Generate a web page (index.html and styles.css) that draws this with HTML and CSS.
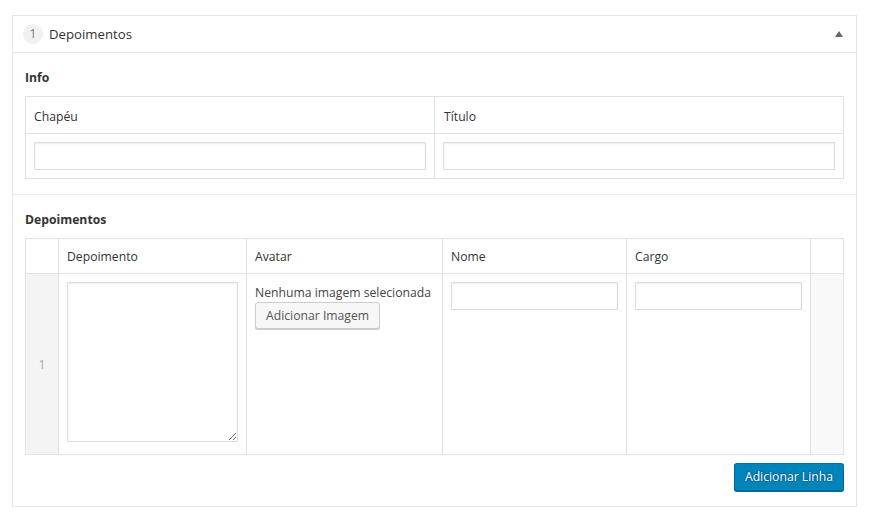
FILE: index.html
```html
<!DOCTYPE html>
<html lang="pt-BR">
  <head>
    <meta charset="UTF-8" />
    <meta name="viewport" content="width=device-width, initial-scale=1.0" />
    <title>Depoimentos</title>
    <link rel="stylesheet" href="styles.css">
  </head>
  <body>
    <div class="postbox">
      <div class="postbox-header">
        <span class="badge">1</span>
        <span class="box-title">Depoimentos</span>
        <span class="toggle"></span>
      </div>

      <div class="field">
        <div class="field-label">Info</div>
        <table class="acf-table info-table">
          <thead>
            <tr>
              <th>Chapéu</th>
              <th>Título</th>
            </tr>
          </thead>
          <tbody>
            <tr>
              <td><input type="text" /></td>
              <td><input type="text" /></td>
            </tr>
          </tbody>
        </table>
      </div>

      <div class="field">
        <div class="field-label">Depoimentos</div>
        <table class="acf-table repeater">
          <thead>
            <tr>
              <th class="order"></th>
              <th class="col-dep">Depoimento</th>
              <th class="col-avatar">Avatar</th>
              <th class="col-nome">Nome</th>
              <th class="col-cargo">Cargo</th>
              <th class="remove"></th>
            </tr>
          </thead>
          <tbody>
            <tr>
              <td class="order">1</td>
              <td><textarea></textarea></td>
              <td>
                <div class="no-image">Nenhuma imagem selecionada</div>
                <button class="button" type="button">Adicionar Imagem</button>
              </td>
              <td><input type="text" /></td>
              <td><input type="text" /></td>
              <td class="remove"></td>
            </tr>
          </tbody>
        </table>
        <div class="actions">
          <button class="button button-primary" type="button">Adicionar Linha</button>
        </div>
      </div>
    </div>
  </body>
</html>
```

FILE: styles.css
```css
body {
  margin: 0;
  padding: 15px 12px;
  background: #fff;
  font-family: "Segoe UI", "Open Sans", "Noto Sans", sans-serif;
  font-size: 12.2px;
  color: #444;
}

.postbox {
  border: 1px solid #e5e5e5;
  background: #fff;
}

.postbox-header {
  display: flex;
  align-items: center;
  height: 36px;
  padding: 0 10px;
  border-bottom: 1px solid #e5e5e5;
}

.badge {
  width: 20px;
  height: 20px;
  border-radius: 50%;
  background: #f1f1f1;
  color: #777;
  text-align: center;
  line-height: 20px;
  font-size: 12px;
}

.box-title {
  margin-left: 6px;
  color: #333;
  font-size: 13.2px;
}

.toggle {
  margin-left: auto;
  margin-right: 3px;
  width: 0;
  height: 0;
  border-left: 4px solid transparent;
  border-right: 4px solid transparent;
  border-bottom: 6px solid #666;
}

.field {
  padding: 15px 12px;
}

.field + .field {
  border-top: 1px solid #eee;
}

.field-label {
  font-weight: bold;
  color: #333;
  margin-bottom: 10px;
  line-height: 18px;
  padding-top: 1px;
  height: 17px;
}

.acf-table {
  width: 100%;
  border: 1px solid #e1e1e1;
  border-collapse: collapse;
  table-layout: fixed;
}

.acf-table th,
.acf-table td {
  border: 1px solid #e1e1e1;
  padding: 8px;
  text-align: left;
  vertical-align: top;
}

.acf-table th {
  font-weight: normal;
  color: #333;
  line-height: 19px;
}

.info-table th {
  padding: 10px 8px 7px;
}

.repeater th {
  padding: 8px 8px 7px;
}

.info-table th + th {
  padding-left: 9px;
}

input[type="text"],
textarea {
  display: block;
  box-sizing: border-box;
  width: 100%;
  margin: 0;
  border: 1px solid #ddd;
  box-shadow: inset 0 1px 2px rgba(0, 0, 0, 0.07);
  background: #fff;
  font: inherit;
}

input[type="text"] {
  height: 28px;
}

textarea {
  height: 160px;
  margin-bottom: 4px;
  resize: vertical;
}

.order {
  width: 16px;
  background: #f4f4f4;
  color: #aaa;
  text-align: center !important;
  vertical-align: middle !important;
}

.remove {
  width: 16px;
  background: #f9f9f9;
}

.acf-table th.order,
.acf-table th.remove {
  background: #fff;
}

.col-dep { width: 171px; }
.col-avatar { width: 179px; }
.col-nome { width: 167px; }

.no-image {
  color: #444;
  line-height: 19px;
  margin-top: 1px;
  white-space: nowrap;
}

.button {
  font: inherit;
  height: 27px;
  padding: 0 10px 1px;
  border: 1px solid #ccc;
  border-radius: 3px;
  background: #f7f7f7;
  color: #555;
  box-shadow: 0 1px 0 #ccc;
  cursor: pointer;
}

.button-primary {
  height: 28px;
  background: #0085ba;
  border-color: #0073aa #006799 #006799;
  color: #fff;
  box-shadow: 0 1px 0 #006799;
  text-shadow: 0 -1px 1px #006799, 1px 0 1px #006799, 0 1px 1px #006799, -1px 0 1px #006799;
}

.actions {
  display: flex;
  justify-content: flex-end;
  margin-top: 8px;
}
```
